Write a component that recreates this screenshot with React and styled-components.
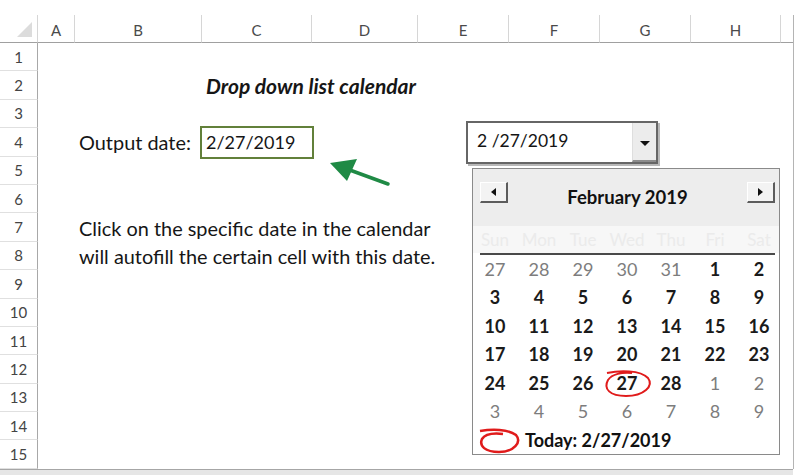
import React from "react";
import styled, { createGlobalStyle } from "styled-components";

const GlobalStyle = createGlobalStyle`
  html, body {
    margin: 0;
    padding: 0;
    background: #ffffff;
  }
  body {
    font-family: Lato, "Open Sans", sans-serif;
    color: #1b1b1b;
  }
`;

const COLS = ["A", "B", "C", "D", "E", "F", "G", "H", ""];
const COL_WIDTHS = "38px 37px 127px 110px 106px 91px 91px 91px 90px 12px";

const Page = styled.div`
  position: relative;
  width: 800px;
  height: 475px;
  overflow: hidden;
  padding-top: 15px;
  box-sizing: border-box;
`;

const Sheet = styled.div`
  display: grid;
  grid-template-columns: ${COL_WIDTHS};
  grid-template-rows: 28px repeat(15, 28.4px);
  width: 793px;
  border-right: 1px solid #b4b4b4;
`;

const Corner = styled.div`
  grid-column: 1;
  grid-row: 1;
  position: relative;
  border-right: 1px solid #d6d6d6;
  border-bottom: 1px solid #a0a0a0;
  &::after {
    content: "";
    position: absolute;
    right: 5px;
    bottom: 5px;
    border-style: solid;
    border-width: 0 0 15px 15px;
    border-color: transparent transparent #dcdcdc transparent;
  }
`;

const ColHead = styled.div`
  grid-row: 1;
  display: flex;
  align-items: center;
  justify-content: center;
  font-size: 15px;
  color: #4a4a4a;
  border-bottom: 1px solid #a0a0a0;
  border-right: ${(p) => (p.$last ? "none" : "1px solid #d6d6d6")};
  padding-top: 2px;
  box-sizing: border-box;
`;

const RowHead = styled.div`
  grid-column: 1;
  display: flex;
  align-items: center;
  justify-content: center;
  font-size: 15px;
  color: #444;
  border-right: 1px solid #a8a8a8;
  border-bottom: 1px solid #e0e0e0;
  box-sizing: border-box;
`;

const Cell = styled.div`
  grid-column: ${(p) => p.$col};
  grid-row: ${(p) => p.$row};
  display: flex;
  align-items: center;
  padding-left: 4px;
  white-space: nowrap;
  font-size: ${(p) => (p.$size ? p.$size : "19.9px")};
  font-weight: ${(p) => (p.$bold ? 700 : 400)};
  font-style: ${(p) => (p.$italic ? "italic" : "normal")};
  color: #161616;
  overflow: visible;
  z-index: 1;
  ${(p) =>
    p.$selected &&
    `
    outline: 2px solid #62803a;
    outline-offset: 0px;
  `}
`;

const Footer = styled.div`
  height: 10px;
  border-top: 1px solid #a6a6a6;
  background: #e6e6e6;
  width: 793px;
`;

/* dropdown combo floating over the sheet */
const Combo = styled.div`
  position: absolute;
  left: 466px;
  top: 121px;
  width: 192px;
  height: 43px;
  box-sizing: border-box;
  border: 2px solid #666;
  box-shadow: 2px 2px 0 #b8b8b8;
  background: #fff;
  display: flex;
  z-index: 3;
`;

const ComboText = styled.div`
  flex: 1;
  display: flex;
  align-items: center;
  padding: 0 0 4px 9px;
  font-size: 17.5px;
  color: #141414;
`;

const ComboButton = styled.div`
  width: 23px;
  background: #ececec;
  border-left: 1px solid #dedede;
  border-bottom: 2px solid #8c8c8c;
  display: flex;
  align-items: center;
  justify-content: center;
  padding-top: 4px;
  &::after {
    content: "";
    border-style: solid;
    border-width: 5px 5px 0 5px;
    border-color: #111 transparent transparent transparent;
  }
`;

const Calendar = styled.div`
  position: absolute;
  left: 472px;
  top: 168px;
  width: 308px;
  height: 287px;
  box-sizing: border-box;
  border: 1px solid #8a8a8a;
  background: #fff;
  z-index: 2;
  display: flex;
  flex-direction: column;
`;

const CalHeader = styled.div`
  height: 57px;
  background: #ededed;
  display: flex;
  align-items: center;
  justify-content: space-between;
  padding: 0 4px 0 7px;
  box-sizing: border-box;
`;

const NavButton = styled.div`
  width: 28px;
  height: 21px;
  margin-bottom: 9px;
  box-sizing: border-box;
  background: #f3f3f3;
  border-top: 1px solid #fff;
  border-left: 1px solid #fff;
  border-right: 2px solid #5c5c5c;
  border-bottom: 2px solid #5c5c5c;
  display: flex;
  align-items: center;
  justify-content: center;
  &::after {
    content: "";
    border-style: solid;
    border-width: ${(p) => (p.$dir === "left" ? "4px 5px 4px 0" : "4px 0 4px 5px")};
    border-color: ${(p) =>
      p.$dir === "left"
        ? "transparent #111 transparent transparent"
        : "transparent transparent transparent #111"};
  }
`;

const MonthTitle = styled.div`
  font-size: 18.5px;
  font-weight: 700;
  color: #111;
`;

const WeekRow = styled.div`
  display: grid;
  grid-template-columns: repeat(7, 44px);
  height: 27px;
  background: #f7f7f7;
  align-items: center;
  justify-items: center;
  font-size: 17px;
  color: #ebebeb;
`;

const Divider = styled.div`
  height: 2px;
  background: #4a4a4a;
  margin: 0 4px 0 7px;
`;

const DayGrid = styled.div`
  display: grid;
  grid-template-columns: repeat(7, 44px);
  grid-auto-rows: 28.4px;
  align-items: center;
  justify-items: center;
`;

const Day = styled.div`
  font-size: 18px;
  font-weight: ${(p) => (p.$muted ? 400 : 700)};
  color: ${(p) => (p.$muted ? "#7d7d7d" : "#1a1a1a")};
`;

const TodayRow = styled.div`
  height: 29px;
  display: flex;
  align-items: center;
  padding-left: 52px;
  font-size: 18px;
  font-weight: 700;
  color: #111;
`;

const Marks = styled.svg`
  position: absolute;
  left: 0;
  top: 0;
  width: 800px;
  height: 475px;
  pointer-events: none;
  z-index: 4;
`;

const WEEKDAYS = ["Sun", "Mon", "Tue", "Wed", "Thu", "Fri", "Sat"];

const DAYS = [
  ...[27, 28, 29, 30, 31].map((d) => ({ d, muted: true })),
  ...Array.from({ length: 28 }, (_, i) => ({ d: i + 1, muted: false })),
  ...Array.from({ length: 9 }, (_, i) => ({ d: i + 1, muted: true })),
];

const App = () => (
  <>
    <GlobalStyle />
    <Page>
      <Sheet>
        <Corner />
        {COLS.map((c, i) => (
          <ColHead key={i} style={{ gridColumn: i + 2 }} $last={i === COLS.length - 1}>
            {c}
          </ColHead>
        ))}
        {Array.from({ length: 15 }, (_, i) => (
          <RowHead key={i} style={{ gridRow: i + 2 }}>
            {i + 1}
          </RowHead>
        ))}

        <Cell $col={4} $row={3} $bold $italic $size="21px">
          Drop down list calendar
        </Cell>
        <Cell $col={3} $row={5}>
          Output date:
        </Cell>
        <Cell $col={4} $row={5} $selected $size="18px">
          2/27/2019
        </Cell>
        <Cell $col={3} $row={8}>
          Click on the specific date in the calendar
        </Cell>
        <Cell $col={3} $row={9}>
          will autofill the certain cell with this date.
        </Cell>
      </Sheet>
      <Footer />

      <Combo>
        <ComboText>2 /27/2019</ComboText>
        <ComboButton />
      </Combo>

      <Calendar>
        <CalHeader>
          <NavButton $dir="left" />
          <MonthTitle>February 2019</MonthTitle>
          <NavButton $dir="right" />
        </CalHeader>
        <WeekRow>
          {WEEKDAYS.map((w) => (
            <span key={w}>{w}</span>
          ))}
        </WeekRow>
        <Divider />
        <DayGrid>
          {DAYS.map((x, i) => (
            <Day key={i} $muted={x.muted}>
              {x.d}
            </Day>
          ))}
        </DayGrid>
        <TodayRow>Today: 2/27/2019</TodayRow>
      </Calendar>

      <Marks viewBox="0 0 800 475">
        {/* green arrow */}
        <line x1="388" y1="184" x2="347" y2="169" stroke="#1f8a45" strokeWidth="3.5" strokeLinecap="round" />
        <polygon points="330,163 357,159 347,181" fill="#1f8a45" />
        {/* red circle around 27 */}
        <path
          d="M607 373 C620 370 640 370 648 378 C654 386 644 396 626 396 C610 396 603 389 608 380 C612 374 622 372 632 373"
          fill="none"
          stroke="#e01b1b"
          strokeWidth="2"
        />
        {/* red circle next to Today */}
        <path
          d="M480 431 C492 429 508 429 516 435 C522 442 514 452 499 452 C485 452 479 446 482 439 C485 434 494 433 503 434"
          fill="none"
          stroke="#e01b1b"
          strokeWidth="2.5"
        />
      </Marks>
    </Page>
  </>
);

export default App;
